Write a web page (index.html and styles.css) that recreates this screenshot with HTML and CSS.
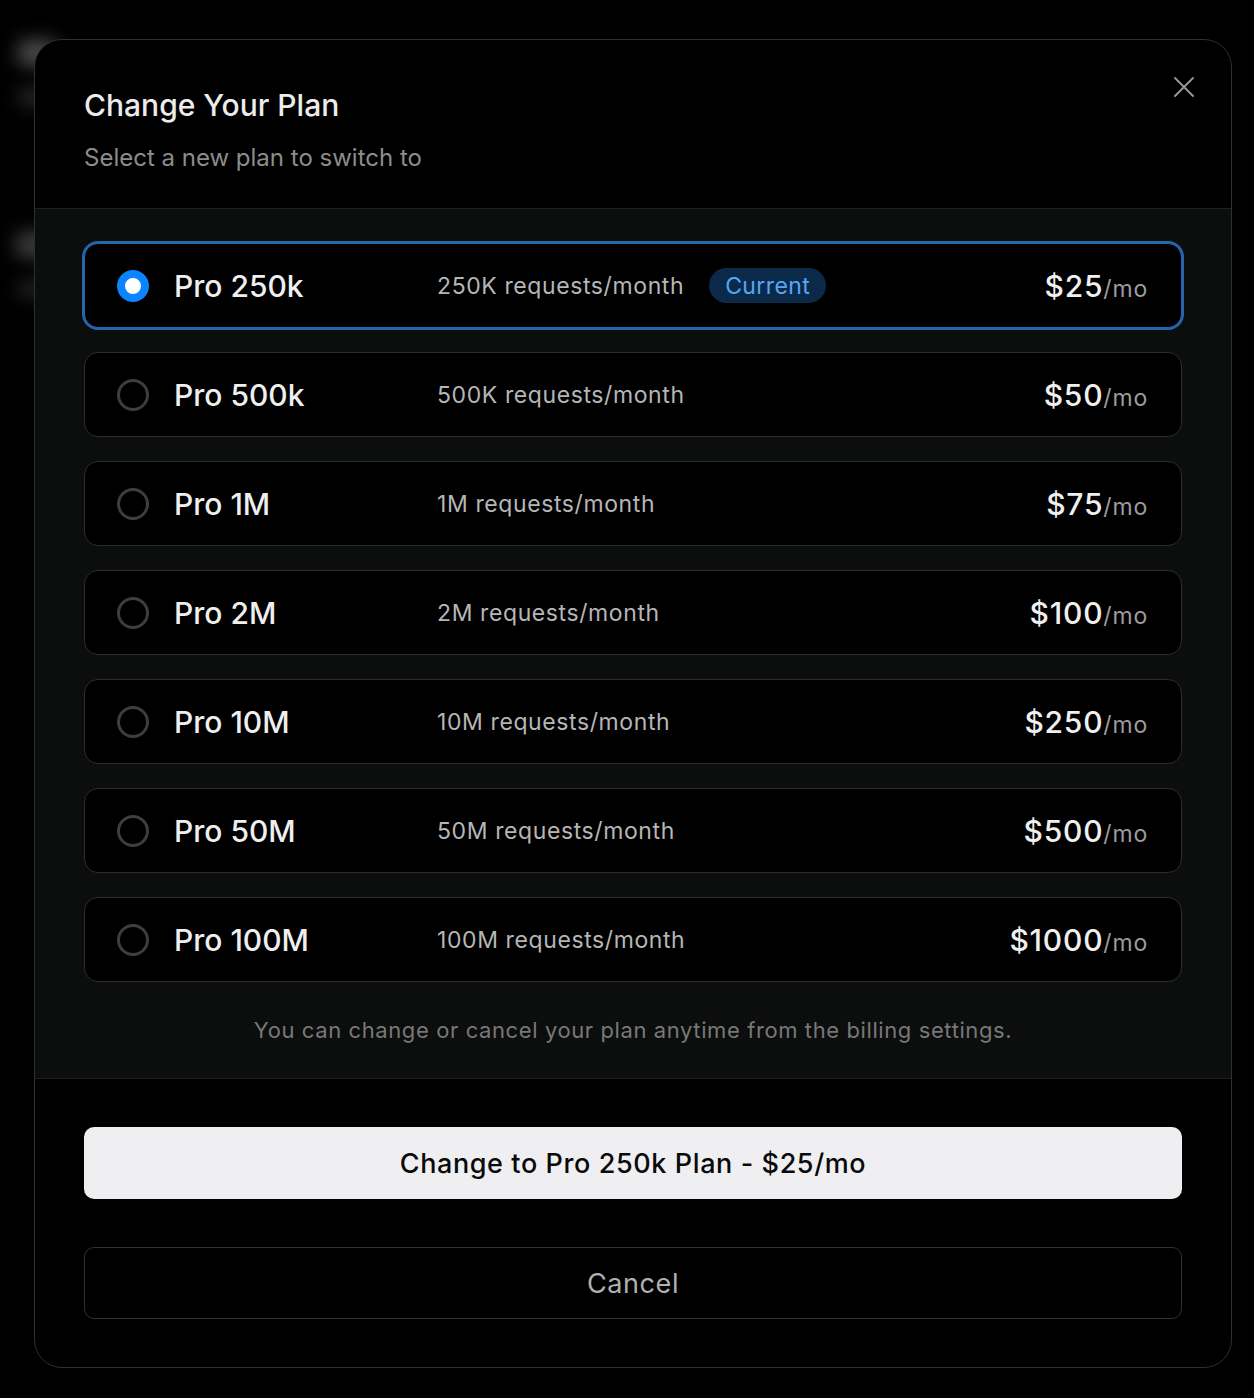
FILE: index.html
```html
<!DOCTYPE html>
<html lang="en">
<head>
<meta charset="utf-8">
<title>Change Your Plan</title>
<link rel="stylesheet" href="styles.css">
</head>
<body>
  <!-- dimmed page behind the modal -->
  <div class="page" aria-hidden="true">
    <span class="ghost ghost-1"></span>
    <span class="ghost ghost-2"></span>
    <span class="ghost ghost-3"></span>
    <span class="ghost ghost-4"></span>
  </div>

  <div class="overlay">
    <div class="dialog" role="dialog" aria-labelledby="dlg-title">
      <header class="dialog-head">
        <h2 class="title" id="dlg-title">Change Your Plan</h2>
        <p class="subtitle">Select a new plan to switch to</p>
        <button class="close" type="button" aria-label="Close">
          <svg width="20" height="20" viewBox="0 0 20 20" fill="none" stroke="currentColor" stroke-width="1.8" stroke-linecap="round">
            <path d="M1 1 L19 19 M19 1 L1 19"/>
          </svg>
        </button>
      </header>

      <section class="plans">
        <ul class="plan-list">
          <li class="plan is-selected">
            <span class="radio"></span>
            <span class="plan-name">Pro 250k</span>
            <span class="plan-quota">250K requests/month</span>
            <span class="badge">Current</span>
            <span class="price"><span class="amount">$25</span><span class="period">/mo</span></span>
          </li>
          <li class="plan">
            <span class="radio"></span>
            <span class="plan-name">Pro 500k</span>
            <span class="plan-quota">500K requests/month</span>
            <span class="price"><span class="amount">$50</span><span class="period">/mo</span></span>
          </li>
          <li class="plan">
            <span class="radio"></span>
            <span class="plan-name">Pro 1M</span>
            <span class="plan-quota">1M requests/month</span>
            <span class="price"><span class="amount">$75</span><span class="period">/mo</span></span>
          </li>
          <li class="plan">
            <span class="radio"></span>
            <span class="plan-name">Pro 2M</span>
            <span class="plan-quota">2M requests/month</span>
            <span class="price"><span class="amount">$100</span><span class="period">/mo</span></span>
          </li>
          <li class="plan">
            <span class="radio"></span>
            <span class="plan-name">Pro 10M</span>
            <span class="plan-quota">10M requests/month</span>
            <span class="price"><span class="amount">$250</span><span class="period">/mo</span></span>
          </li>
          <li class="plan">
            <span class="radio"></span>
            <span class="plan-name">Pro 50M</span>
            <span class="plan-quota">50M requests/month</span>
            <span class="price"><span class="amount">$500</span><span class="period">/mo</span></span>
          </li>
          <li class="plan">
            <span class="radio"></span>
            <span class="plan-name">Pro 100M</span>
            <span class="plan-quota">100M requests/month</span>
            <span class="price"><span class="amount">$1000</span><span class="period">/mo</span></span>
          </li>
        </ul>
        <p class="note">You can change or cancel your plan anytime from the billing settings.</p>
      </section>

      <footer class="dialog-foot">
        <button class="btn btn-primary" type="button">Change to Pro 250k Plan - $25/mo</button>
        <button class="btn btn-outline" type="button">Cancel</button>
      </footer>
    </div>
  </div>
</body>
</html>
```

FILE: styles.css
```css
* {
  box-sizing: border-box;
}

html,
body {
  margin: 0;
  padding: 0;
  background: #000;
}

body {
  width: 1254px;
  height: 1398px;
  overflow: hidden;
  position: relative;
  font-family: Inter, "Noto Sans", "Liberation Sans", sans-serif;
  color: #ededed;
  -webkit-font-smoothing: antialiased;
}

/* blurred content of the underlying page */
.page {
  position: absolute;
  inset: 0;
  z-index: 0;
}

.ghost {
  position: absolute;
  background: #3a3a3a;
  border-radius: 6px;
  filter: blur(9px);
}

.ghost-1 { left: 18px; top: 40px; width: 40px; height: 26px; background: #4a4a4a; }
.ghost-2 { left: 18px; top: 88px; width: 40px; height: 18px; background: #262626; }
.ghost-3 { left: 16px; top: 232px; width: 40px; height: 26px; background: #3c3c3c; }
.ghost-4 { left: 18px; top: 280px; width: 40px; height: 18px; background: #222; }

.overlay {
  position: relative;
  z-index: 1;
  display: flex;
  padding: 39px 0 0 34px;
}

.dialog {
  position: relative;
  width: 1198px;
  background: #000;
  border: 1px solid #2f3030;
  border-radius: 28px;
  overflow: hidden;
}

/* header */
.dialog-head {
  padding: 48px 49px 35px;
  border-bottom: 1px solid #1f2020;
}

.title {
  margin: 0;
  font-size: 30px;
  line-height: 34px;
  font-weight: 500;
  color: #ececec;
  letter-spacing: 0;
}

.subtitle {
  margin: 21px 0 0;
  font-size: 24px;
  line-height: 30px;
  font-weight: 400;
  color: #8c8c8c;
}

.close {
  position: absolute;
  top: 37px;
  right: 37px;
  width: 20px;
  height: 20px;
  padding: 0;
  border: 0;
  background: none;
  color: #9a9a9a;
  display: flex;
}

/* plan list */
.plans {
  background: #0c0d0d;
  padding: 34px 49px 34px;
  border-bottom: 1px solid #1f2020;
}

.plan-list {
  list-style: none;
  margin: 0;
  padding: 0;
  display: flex;
  flex-direction: column;
  gap: 24px;
}

.plan {
  height: 85px;
  display: flex;
  align-items: center;
  padding: 0 33px 0 32px;
  background: #000;
  border: 1px solid #2c2d2d;
  border-radius: 14px;
}

.plan.is-selected {
  border-color: #2566ae;
  box-shadow: 0 0 0 2px #2566ae;
}

.radio {
  flex: 0 0 32px;
  width: 32px;
  height: 32px;
  border-radius: 50%;
  border: 3px solid #3e3e3e;
  margin-right: 25px;
}

.is-selected .radio {
  border: 8px solid #0a84ff;
  background: #fff;
}

.plan-name {
  flex: 0 0 263px;
  font-size: 30px;
  font-weight: 500;
  color: #efefef;
}

.plan-quota {
  font-size: 23px;
  color: #b6b6b6;
  letter-spacing: 0.6px;
}

.badge {
  margin-left: 25px;
  height: 35px;
  display: inline-flex;
  align-items: center;
  padding: 0 16px;
  border-radius: 18px;
  background: #0b2a4a;
  color: #55a7f5;
  font-size: 23px;
  letter-spacing: 0.4px;
}

.price {
  margin-left: auto;
  display: flex;
  align-items: baseline;
}

.amount {
  font-size: 30px;
  font-weight: 500;
  color: #f0f0f0;
  letter-spacing: 0.8px;
}

.period {
  font-size: 23px;
  color: #9c9c9c;
  letter-spacing: 0.8px;
}

.note {
  margin: 34px 0 0;
  text-align: center;
  font-size: 22px;
  line-height: 28px;
  color: #787878;
  letter-spacing: 0.6px;
}

/* actions */
.dialog-foot {
  display: flex;
  flex-direction: column;
  gap: 48px;
  padding: 48px 49px 48px;
}

.btn {
  height: 72px;
  width: 100%;
  border-radius: 10px;
  font-family: inherit;
  font-size: 27px;
  letter-spacing: 0.6px;
  cursor: pointer;
}

.btn-primary {
  background: #efeff1;
  border: 0;
  color: #0a0a0a;
  font-weight: 500;
}

.btn-outline {
  background: #000;
  border: 1px solid #303131;
  color: #b0b0b0;
  font-weight: 400;
}
```
